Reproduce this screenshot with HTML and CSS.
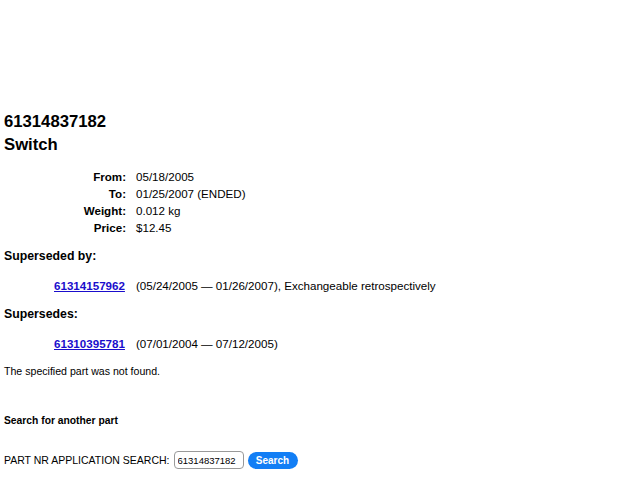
FILE: index.html
```html
<!DOCTYPE html>
<html lang="en">
<head>
    <meta charset="UTF-8">
    <title>61314837182 Switch</title>
    <link rel="stylesheet" href="styles.css">
</head>
<body>
    <div class="part">
        <h1>61314837182</h1>
        <h2>Switch</h2>
        <table class="details">
            <tr><th>From:</th><td>05/18/2005</td></tr>
            <tr><th>To:</th><td>01/25/2007 (ENDED)</td></tr>
            <tr><th>Weight:</th><td>0.012 kg</td></tr>
            <tr><th>Price:</th><td>$12.45</td></tr>
        </table>

        <h3>Superseded by:</h3>
        <p class="ref"><a href="#">61314157962</a><span>(05/24/2005 &mdash; 01/26/2007), Exchangeable retrospectively</span></p>

        <h3>Supersedes:</h3>
        <p class="ref"><a href="#">61310395781</a><span>(07/01/2004 &mdash; 07/12/2005)</span></p>
    </div>

    <p class="notice">The specified part was not found.</p>

    <h4>Search for another part</h4>
    <form class="search">
        <label for="part">PART NR APPLICATION SEARCH:</label>
        <input type="text" id="part" name="part" value="61314837182">
        <button type="submit">Search</button>
    </form>
</body>
</html>
```

FILE: styles.css
```css
body {
    font-family: "Liberation Sans", Arial, sans-serif;
    margin: 0;
    padding: 112px 4px 0;
    color: #000;
    background-color: #fff;
}
h1 {
    font-size: 16.7px;
    margin: 0;
    line-height: 20px;
}
h2 {
    font-size: 16.7px;
    margin: 3px 0 0;
    line-height: 20px;
}
.details {
    border-collapse: collapse;
    margin: 13px 0 0 70px;
    font-size: 11.6px;
}
.details th {
    text-align: right;
    padding: 0 10px 0 0;
    height: 17px;
    width: 52px;
}
.details td {
    padding: 0;
}
h3 {
    font-size: 12.3px;
    margin: 12px 0 0;
    line-height: 16px;
}
.ref {
    font-size: 11.6px;
    margin: 14px 0 0 50px;
    line-height: 16px;
}
.ref a {
    color: #1a0dcc;
    font-weight: bold;
    margin-right: 11px;
}
.notice {
    font-size: 10.6px;
    margin: 12px 0 0;
    line-height: 14px;
}
h4 {
    font-size: 10.3px;
    margin: 36px 0 0;
    line-height: 14px;
}
.search {
    margin: 23px 0 0;
    display: flex;
    align-items: center;
    font-size: 10.5px;
}
.search label {
    margin-right: 4px;
}
.search input {
    font-family: "Liberation Sans", Arial, sans-serif;
    font-size: 9.5px;
    width: 70px;
    height: 18px;
    box-sizing: border-box;
    padding: 2px 3px;
    border: 1px solid #999;
    border-radius: 4px;
}
.search button {
    margin-left: 4px;
    width: 50px;
    height: 17px;
    background-color: #127ef5;
    color: white;
    font-family: "Liberation Sans", Arial, sans-serif;
    font-weight: bold;
    font-size: 10px;
    border: none;
    border-radius: 9px;
    padding: 0;
}
```
